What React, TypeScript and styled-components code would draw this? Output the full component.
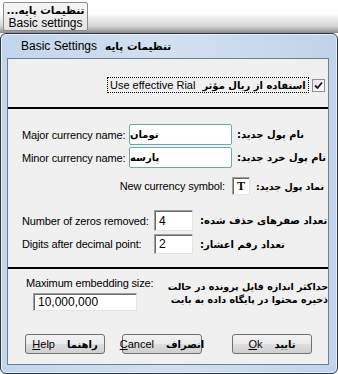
import styled, { createGlobalStyle } from 'styled-components';

const GlobalStyle = createGlobalStyle`
  html, body {
    margin: 0;
    padding: 0;
    background: #ffffff;
  }
  body {
    font-family: "Liberation Sans", Arial, sans-serif;
    font-size: 11px;
    color: #000;
  }
`;

const Page = styled.div`
  width: 338px;
  height: 374px;
  display: flex;
  flex-direction: column;
  overflow: hidden;
`;

const TopStrip = styled.div`
  height: 33px;
  flex: none;
  padding: 2px 0 0 3px;
  box-sizing: border-box;
  background: linear-gradient(#ffffff 0%, #ffffff 40%, #d4d4d4 80%, #8a8a8a 100%);
`;

const LaunchButton = styled.button`
  width: 85px;
  height: 29px;
  padding: 0;
  border: 1px solid #8c8c8c;
  border-radius: 2px;
  background: linear-gradient(#f7f7f7, #e4e4e4);
  display: flex;
  flex-direction: column;
  align-items: center;
  justify-content: center;
  font-family: "Liberation Sans", Arial, sans-serif;
  font-size: 12px;
  line-height: 13px;
  color: #000;
`;

const Fa = styled.span<{ $size?: number }>`
  font-family: "DejaVu Sans", "Noto Sans", sans-serif;
  font-weight: bold;
  font-size: ${(p) => p.$size ?? 10}px;
  direction: rtl;
  unicode-bidi: isolate;
  white-space: nowrap;
`;

const Window = styled.div`
  flex: 1;
  display: flex;
  flex-direction: column;
  border: 1px solid #2c3540;
  border-radius: 6px;
  background: linear-gradient(90deg, #c2d5ec, #d2e0f1 50%, #c0d3ea);
  padding: 0 8px 8px 6px;
  box-shadow: inset 0 0 0 1px #e8f0fa;
`;

const TitleBar = styled.div`
  height: 24px;
  display: flex;
  align-items: center;
  gap: 8px;
  padding-left: 14px;
  font-size: 12px;
  color: #000;
`;

const Client = styled.div`
  flex: 1;
  background: #f0f0f0;
  border: 1px solid #6d7d92;
  display: flex;
  flex-direction: column;
`;

const Row = styled.div<{ $top: number; $left?: number; $height?: number }>`
  display: flex;
  align-items: center;
  margin-top: ${(p) => p.$top}px;
  padding-left: ${(p) => p.$left ?? 0}px;
  height: ${(p) => p.$height ?? 21}px;
`;

const FocusLabel = styled.div`
  height: 16px;
  box-sizing: border-box;
  border: 1px dotted #000;
  display: flex;
  align-items: center;
  gap: 7px;
  padding: 0 2px;
  font-size: 11px;
  white-space: nowrap;
`;

const CheckBox = styled.div`
  width: 13px;
  height: 13px;
  box-sizing: border-box;
  margin-left: 3px;
  border: 1px solid #8e8f8f;
  background: linear-gradient(135deg, #e6e6e6, #ffffff);
  display: flex;
  align-items: center;
  justify-content: center;
`;

const Separator = styled.div<{ $top: number }>`
  height: 2px;
  margin-top: ${(p) => p.$top}px;
  background: #000;
`;

const EnLabel = styled.div<{ $width: number; $right?: boolean }>`
  width: ${(p) => p.$width}px;
  flex: none;
  font-size: 11px;
  letter-spacing: -0.15px;
  text-align: ${(p) => (p.$right ? 'right' : 'left')};
  padding-right: ${(p) => (p.$right ? 7 : 0)}px;
  box-sizing: border-box;
  white-space: nowrap;
`;

const FaLabel = styled(Fa)<{ $gap: number }>`
  margin-left: ${(p) => p.$gap}px;
`;

const ThemedInput = styled.div`
  width: 103px;
  height: 100%;
  box-sizing: border-box;
  border: 1px solid #6fa8a8;
  border-radius: 2px;
  background: #fff;
  display: flex;
  align-items: center;
  justify-content: flex-end;
  padding-right: 8px;
  direction: rtl;
`;

const SunkenBox = styled.div<{ $width: number }>`
  width: ${(p) => p.$width}px;
  height: 100%;
  box-sizing: border-box;
  background: #fff;
  border-top: 1px solid #a0a0a0;
  border-left: 1px solid #a0a0a0;
  border-right: 1px solid #e3e3e3;
  border-bottom: 1px solid #e3e3e3;
  box-shadow: inset 1px 1px 0 #696969;
  display: flex;
  align-items: center;
  padding-left: 4px;
  font-size: 12px;
`;

const SymbolBox = styled(SunkenBox)`
  justify-content: center;
  padding-left: 0;
  font-family: "Liberation Serif", "Times New Roman", serif;
  font-weight: bold;
  font-size: 12px;
`;

const Embed = styled.div`
  display: flex;
  margin-top: 7px;
`;

const EmbedLeft = styled.div`
  display: flex;
  flex-direction: column;
  width: 124px;
  padding-left: 18px;
  flex: none;
`;

const EmbedLabel = styled.div`
  font-size: 11px;
  letter-spacing: -0.15px;
  height: 14px;
  line-height: 14px;
  white-space: nowrap;
`;

const EmbedInput = styled(SunkenBox)`
  margin: 3px 0 0 7px;
  height: 18px;
  flex: none;
`;

const EmbedNote = styled(Fa)`
  display: block;
  width: 172px;
  margin-left: 12px;
  margin-top: 4px;
  line-height: 13px;
  text-align: right;
`;

const ButtonBar = styled.div`
  display: flex;
  margin-top: 23px;
  padding-left: 17px;
  height: 20px;
`;

const DlgButton = styled.button<{ $gap?: number }>`
  width: 80px;
  height: 20px;
  margin-left: ${(p) => p.$gap ?? 0}px;
  padding: 0;
  border: 1px solid #707070;
  border-radius: 3px;
  background: linear-gradient(#f2f2f2 0%, #ebebeb 50%, #dddddd 51%, #cfcfcf 100%);
  display: flex;
  align-items: center;
  justify-content: center;
  gap: 12px;
  font-family: "Liberation Sans", Arial, sans-serif;
  font-size: 11px;
  color: #000;
`;

const Key = styled.span`
  text-decoration: underline;
`;

const Check = () => (
  <svg width="9" height="9" viewBox="0 0 9 9">
    <path d="M1 4.5 L3.5 7 L8 1.5" fill="none" stroke="#1a1a1a" strokeWidth="1.8" />
  </svg>
);

export default function App() {
  return (
    <>
      <GlobalStyle />
      <Page>
        <TopStrip>
          <LaunchButton>
            <Fa $size={10.5}>تنظیمات پایه...</Fa>
            <span>Basic settings</span>
          </LaunchButton>
        </TopStrip>
        <Window>
          <TitleBar>
            <span>Basic Settings</span>
            <Fa $size={10.5}>تنظیمات پایه</Fa>
          </TitleBar>
          <Client>
            <Row $top={18} $left={99} $height={16}>
              <FocusLabel>
                <span>Use effective Rial</span>
                <Fa>استفاده از ریال مؤثر</Fa>
              </FocusLabel>
              <CheckBox>
                <Check />
              </CheckBox>
            </Row>
            <Separator $top={14} />
            <Row $top={15} $left={14}>
              <EnLabel $width={107}>Major currency name:</EnLabel>
              <ThemedInput>
                <Fa>تومان</Fa>
              </ThemedInput>
              <FaLabel $gap={5}>نام پول جدید:</FaLabel>
            </Row>
            <Row $top={2} $left={14}>
              <EnLabel $width={107}>Minor currency name:</EnLabel>
              <ThemedInput>
                <Fa>پارسه</Fa>
              </ThemedInput>
              <FaLabel $gap={5}>نام پول خرد جدید:</FaLabel>
            </Row>
            <Row $top={9} $left={14} $height={18}>
              <EnLabel $width={210} $right>
                New currency symbol:
              </EnLabel>
              <SymbolBox $width={18}>T</SymbolBox>
              <FaLabel $gap={6} $size={9.5}>
                نماد پول جدید:
              </FaLabel>
            </Row>
            <Row $top={15} $left={14}>
              <EnLabel $width={132}>Number of zeros removed:</EnLabel>
              <SunkenBox $width={39}>4</SunkenBox>
              <FaLabel $gap={7}>تعداد صفرهای حذف شده:</FaLabel>
            </Row>
            <Row $top={3} $left={14} $height={20}>
              <EnLabel $width={132}>Digits after decimal point:</EnLabel>
              <SunkenBox $width={39}>2</SunkenBox>
              <FaLabel $gap={7}>تعداد رقم اعشار:</FaLabel>
            </Row>
            <Separator $top={13} />
            <Embed>
              <EmbedLeft>
                <EmbedLabel>Maximum embedding size:</EmbedLabel>
                <EmbedInput $width={104}>10,000,000</EmbedInput>
              </EmbedLeft>
              <EmbedNote $size={9.5}>
                حداکثر اندازه فایل پرونده در حالت
                <br />
                ذخیره محتوا در پایگاه داده به بایت
              </EmbedNote>
            </Embed>
            <ButtonBar>
              <DlgButton>
                <span>
                  <Key>H</Key>elp
                </span>
                <Fa>راهنما</Fa>
              </DlgButton>
              <DlgButton $gap={17}>
                <span>
                  <Key>C</Key>ancel
                </span>
                <Fa>انصراف</Fa>
              </DlgButton>
              <DlgButton $gap={30}>
                <span>
                  <Key>O</Key>k
                </span>
                <Fa>تایید</Fa>
              </DlgButton>
            </ButtonBar>
          </Client>
        </Window>
      </Page>
    </>
  );
}
